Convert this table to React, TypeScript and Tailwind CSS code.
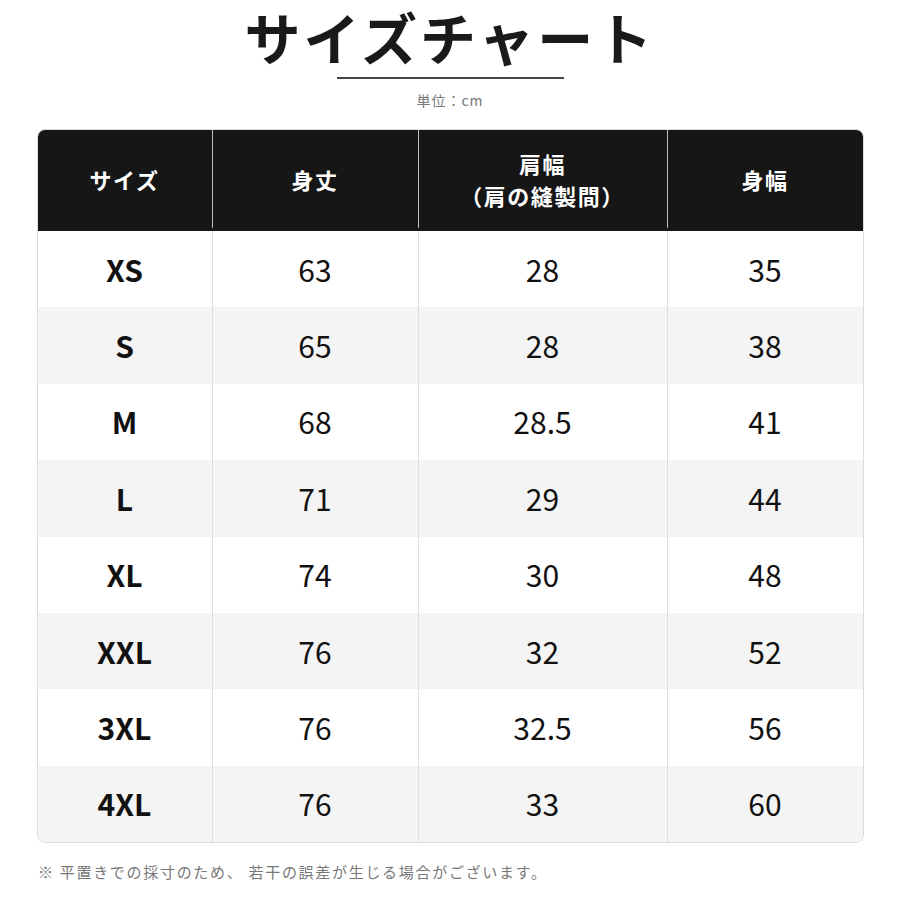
import React from "react";

const ROWS = [
  ["XS", "63", "28", "35"],
  ["S", "65", "28", "38"],
  ["M", "68", "28.5", "41"],
  ["L", "71", "29", "44"],
  ["XL", "74", "30", "48"],
  ["XXL", "76", "32", "52"],
  ["3XL", "76", "32.5", "56"],
  ["4XL", "76", "33", "60"],
];

const COLS = "grid grid-cols-[175px_206px_249px_1fr]";

export default function App() {
  return (
    <div
      className="w-[900px] h-[900px] bg-white flex flex-col items-center text-[#111]"
      style={{ fontFamily: '"Noto Sans CJK JP", "Noto Sans", sans-serif' }}
    >
      {/* Title */}
      <h1 className="pt-[2px] text-[56px] leading-[68px] font-bold tracking-[3px] text-[#1a1a1a]">
        サイズチャート
      </h1>
      <div className="mt-[7px] w-[227px] h-[2px] bg-[#444]" />
      <p className="mt-[12px] text-[14px] leading-[18px] tracking-[1px] text-[#777]">単位：cm</p>

      {/* Table */}
      <div className="mt-[20px] w-[827px] h-[714px] flex flex-col rounded-[8px] border border-[#dcdcdc] overflow-hidden">
        <div className={`${COLS} h-[101px] pb-[3px] bg-[#161616] text-white font-bold text-[22px] leading-[32px] tracking-[1.5px]`}>
          <div className="flex items-center justify-center border-r border-[#bdbdbd]">サイズ</div>
          <div className="flex items-center justify-center border-r border-[#bdbdbd]">身丈</div>
          <div className="flex flex-col items-center justify-center border-r border-[#bdbdbd]">
            <span>肩幅</span>
            <span>（肩の縫製間）</span>
          </div>
          <div className="flex items-center justify-center">身幅</div>
        </div>
        {ROWS.map((r, i) => (
          <div
            key={r[0]}
            className={`${COLS} flex-1 text-[30px] ${i % 2 === 1 ? "bg-[#f4f4f4]" : "bg-white"}`}
          >
            <div className="flex items-center justify-center font-bold border-r border-[#dedede]">{r[0]}</div>
            <div className="flex items-center justify-center border-r border-[#dedede]">{r[1]}</div>
            <div className="flex items-center justify-center border-r border-[#dedede]">{r[2]}</div>
            <div className="flex items-center justify-center">{r[3]}</div>
          </div>
        ))}
      </div>

      {/* Note */}
      <p className="self-start ml-[38px] mt-[19px] text-[15px] leading-[20px] tracking-[1.7px] text-[#777]">
        ※ 平置きでの採寸のため、 若干の誤差が生じる場合がございます。
      </p>
    </div>
  );
}
